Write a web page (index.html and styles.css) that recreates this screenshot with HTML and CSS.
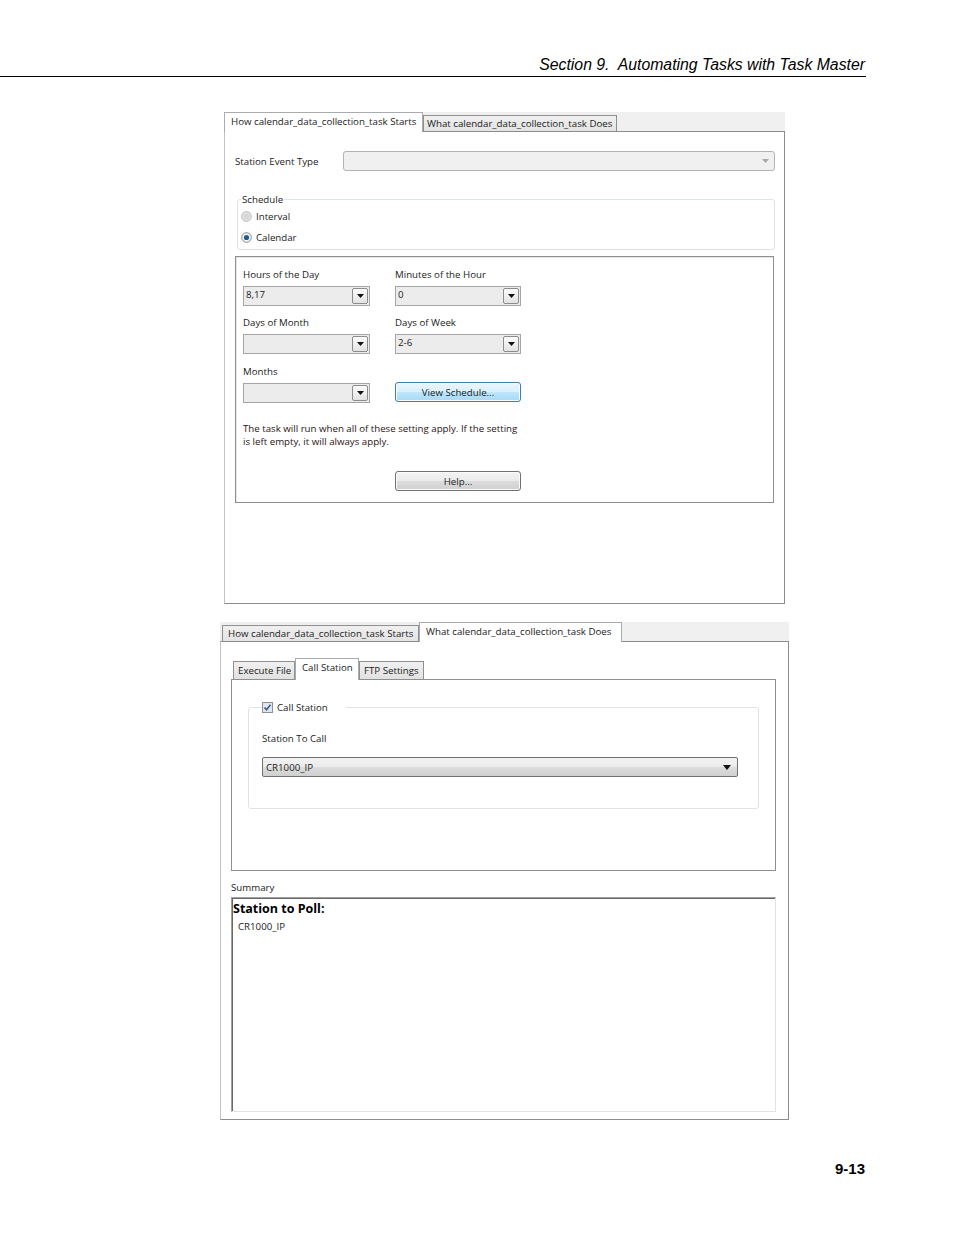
FILE: index.html
```html
<!DOCTYPE html>
<html lang="en">
<head>
    <meta charset="UTF-8">
    <meta name="viewport" content="width=device-width, initial-scale=1.0">
    <title>Section 9. Automating Tasks with Task Master</title>
    <link rel="stylesheet" href="styles.css">
</head>
<body>
    <div class="page-head"><span>Section 9.&nbsp; Automating Tasks with Task Master</span></div>

    <!-- first screenshot: how the task starts -->
    <div class="shot shot-start">
        <div class="tabs">
            <div class="tab active">How calendar_data_collection_task Starts</div>
            <div class="tab">What calendar_data_collection_task Does</div>
        </div>
        <div class="tab-body start-body">
            <div class="event-row">
                <span class="event-label">Station Event Type</span>
                <div class="flat-combo">
                    <svg width="7" height="4" viewBox="0 0 7 4"><path d="M0 0h7L3.5 4z" fill="#a8a8a8"/></svg>
                </div>
            </div>

            <fieldset class="group schedule">
                <legend>Schedule</legend>
                <div class="radio">
                    <svg width="11" height="11" viewBox="0 0 11 11"><circle cx="5.5" cy="5.5" r="4.8" fill="#e8e8e8" stroke="#b5b5b5"/><circle cx="5.5" cy="5.5" r="3" fill="#d6d6d6"/></svg>
                    <span>Interval</span>
                </div>
                <div class="radio">
                    <svg width="11" height="11" viewBox="0 0 11 11"><circle cx="5.5" cy="5.5" r="4.8" fill="#f4f4f4" stroke="#8a8a8a"/><circle cx="5.5" cy="5.5" r="2.6" fill="#1f5f8f"/></svg>
                    <span>Calendar</span>
                </div>
            </fieldset>

            <div class="calendar-box">
                <div class="cal-grid">
                    <div class="field">
                        <div class="field-label">Hours of the Day</div>
                        <div class="dropdown"><span>8,17</span><span class="drop-btn"><svg width="7" height="4" viewBox="0 0 7 4"><path d="M0 0h7L3.5 4z" fill="#111"/></svg></span></div>
                    </div>
                    <div class="field">
                        <div class="field-label">Minutes of the Hour</div>
                        <div class="dropdown"><span>0</span><span class="drop-btn"><svg width="7" height="4" viewBox="0 0 7 4"><path d="M0 0h7L3.5 4z" fill="#111"/></svg></span></div>
                    </div>
                    <div class="field">
                        <div class="field-label">Days of Month</div>
                        <div class="dropdown"><span></span><span class="drop-btn"><svg width="7" height="4" viewBox="0 0 7 4"><path d="M0 0h7L3.5 4z" fill="#111"/></svg></span></div>
                    </div>
                    <div class="field">
                        <div class="field-label">Days of Week</div>
                        <div class="dropdown"><span>2-6</span><span class="drop-btn"><svg width="7" height="4" viewBox="0 0 7 4"><path d="M0 0h7L3.5 4z" fill="#111"/></svg></span></div>
                    </div>
                    <div class="field last-row">
                        <div class="field-label">Months</div>
                        <div class="dropdown"><span></span><span class="drop-btn"><svg width="7" height="4" viewBox="0 0 7 4"><path d="M0 0h7L3.5 4z" fill="#111"/></svg></span></div>
                    </div>
                    <div class="field last-row button-field">
                        <button type="button" class="btn btn-blue">View Schedule...</button>
                    </div>
                </div>
                <p class="note">The task will run when all of these setting apply. If the setting<br>is left empty, it will always apply.</p>
                <div class="help-row">
                    <button type="button" class="btn">Help...</button>
                </div>
            </div>
        </div>
    </div>

    <!-- second screenshot: what the task does -->
    <div class="shot shot-does">
        <div class="tabs">
            <div class="tab">How calendar_data_collection_task Starts</div>
            <div class="tab active">What calendar_data_collection_task Does</div>
        </div>
        <div class="tab-body does-body">
            <div class="subtabs">
                <div class="subtab">Execute File</div>
                <div class="subtab active">Call Station</div>
                <div class="subtab">FTP Settings</div>
            </div>
            <div class="sub-panel">
                <fieldset class="group call-group">
                    <legend>
                        <svg width="11" height="11" viewBox="0 0 11 11"><rect x="0.5" y="0.5" width="10" height="10" fill="#dfe6ee" stroke="#8e8f8f"/><path d="M2.5 5.5l2 2.3 4-5" fill="none" stroke="#3b5a8a" stroke-width="1.6"/></svg>
                        <span>Call Station</span>
                    </legend>
                    <div class="call-label">Station To Call</div>
                    <div class="wide-combo">
                        <span>CR1000_IP</span>
                        <svg width="8" height="5" viewBox="0 0 8 5"><path d="M0 0h8L4 5z" fill="#111"/></svg>
                    </div>
                </fieldset>
            </div>
            <div class="summary-label">Summary</div>
            <div class="summary">
                <div class="summary-title">Station to Poll:</div>
                <div class="summary-item">CR1000_IP</div>
            </div>
        </div>
    </div>

    <div class="page-foot">9-13</div>
</body>
</html>
```

FILE: styles.css
```css
body {
    margin: 0;
    background: #fff;
    color: #000;
    font-family: "Liberation Sans", Arial, sans-serif;
}

.page-head {
    width: 866px;
    padding: 56px 0 3px;
    border-bottom: 1px solid #000;
    text-align: right;
    font-size: 15.8px;
    line-height: 17px;
    font-style: italic;
}

.page-head span {
    padding-right: 1px;
}

.page-foot {
    width: 865px;
    margin-top: 40px;
    text-align: right;
    font-size: 15px;
    line-height: 17px;
    font-weight: bold;
}

/* windows dialog look */
.shot {
    font-family: "Open Sans", "Noto Sans", sans-serif;
    font-size: 9.7px;
    color: #1a1a1a;
}

.shot-start {
    margin: 35px 0 0 224px;
    width: 561px;
}

.shot-does {
    margin: 18px 0 0 220px;
    width: 569px;
}

.tabs {
    display: flex;
    align-items: flex-end;
    height: 19px;
    background: #f0f0f0;
}

.tab {
    box-sizing: border-box;
    height: 16px;
    padding: 0 0 0 3px;
    line-height: 15px;
    white-space: nowrap;
    background: linear-gradient(#f0f0f0, #e3e3e3);
    border: 1px solid #8e8f8f;
    border-bottom: none;
}

.tab.active {
    position: relative;
    z-index: 1;
    height: 20px;
    margin-bottom: -1px;
    padding-left: 6px;
    line-height: 17px;
    background: #fff;
    border-color: #a9abaf;
}

.shot-start .tab.active { width: 199px; }
.shot-start .tab { width: 194px; }
.shot-does .tab { width: 197px; margin-left: 2px; padding-left: 5px; }
.shot-does .tab.active { width: 203px; margin-left: 0; padding-left: 6px; }

.tab-body {
    box-sizing: border-box;
    background: #fff;
    border: 1px solid #8c8c8c;
    border-left-color: #c3c3c3;
}

.start-body {
    height: 473px;
    width: 561px;
}

.does-body {
    width: 569px;
    height: 479px;
    padding-bottom: 7px;
}

.event-row {
    display: flex;
    align-items: center;
    height: 20px;
    margin-top: 19px;
    padding-left: 10px;
}

.event-label {
    width: 108px;
}

.flat-combo {
    box-sizing: border-box;
    width: 432px;
    height: 20px;
    display: flex;
    align-items: center;
    justify-content: flex-end;
    padding-right: 5px;
    background: #f0f0f0;
    border: 1px solid #b3b3b3;
    border-radius: 3px;
}

.group {
    margin: 0;
    border: 1px solid #dde3e8;
    border-radius: 3px;
}

.group legend {
    padding: 0 1px;
    line-height: 13px;
}

.schedule {
    margin: 22px 9px 0 12px;
    padding: 0 4px 5px 3px;
}

.radio {
    display: flex;
    align-items: center;
    gap: 4px;
    height: 13px;
    margin-top: 4px;
}

.radio + .radio {
    margin-top: 8px;
}

.calendar-box {
    margin: 6px 10px 0;
    padding: 11px 7px 11px;
    border: 1px solid #8f8f8f;
    box-shadow: inset 1px 1px 0 #e6e6e6;
}

.cal-grid {
    display: grid;
    grid-template-columns: 127px 126px;
    column-gap: 25px;
    row-gap: 10px;
}

.last-row {
    margin-top: 1px;
}

.field-label {
    line-height: 14px;
    margin-bottom: 4px;
}

.dropdown {
    box-sizing: border-box;
    height: 20px;
    display: flex;
    justify-content: space-between;
    align-items: flex-start;
    padding: 1px 1px 0 2px;
    line-height: 14px;
    background: #ececec;
    border: 1px solid #a5a5a5;
}

.drop-btn {
    box-sizing: border-box;
    width: 16px;
    height: 16px;
    display: flex;
    align-items: center;
    justify-content: center;
    background: linear-gradient(#fcfcfc, #e2e2e2);
    border: 1px solid #8c8c8c;
    border-radius: 2px;
}

.button-field {
    display: flex;
    align-items: flex-end;
}

.btn {
    box-sizing: border-box;
    width: 126px;
    height: 20px;
    padding: 0;
    font: inherit;
    color: #1a1a1a;
    background: linear-gradient(#f3f3f3 0%, #ebebeb 50%, #dcdcdc 51%, #cfcfcf 100%);
    border: 1px solid #707070;
    border-radius: 3px;
    box-shadow: inset 0 0 0 1px #fbfbfb;
}

.btn-blue {
    margin-bottom: 1px;
    background: linear-gradient(#eaf6fd 0%, #d9f0fc 50%, #bee6fd 51%, #a7d9f5 100%);
    border-color: #3c7fb1;
}

.note {
    margin: 19px 0 0;
    line-height: 13px;
    color: #2a1212;
}

.help-row {
    margin-top: 23px;
    padding-left: 152px;
}

.subtabs {
    display: flex;
    align-items: flex-end;
    margin: 16px 0 0 12px;
    height: 21px;
}

.subtab {
    box-sizing: border-box;
    height: 18px;
    padding: 0 0 0 4px;
    line-height: 17px;
    background: linear-gradient(#f0f0f0, #e1e1e1);
    border: 1px solid #8e8f8f;
    border-bottom: none;
}

.subtab:nth-child(1) { width: 62px; }
.subtab:nth-child(3) { width: 65px; }

.subtab.active {
    position: relative;
    z-index: 1;
    width: 64px;
    height: 22px;
    margin-bottom: -1px;
    padding-left: 6px;
    line-height: 18px;
    background: #fff;
    border-color: #a9abaf;
}

.sub-panel {
    box-sizing: border-box;
    width: 545px;
    height: 192px;
    margin-left: 10px;
    border: 1px solid #8e8f8f;
}

.call-group {
    width: 511px;
    box-sizing: border-box;
    margin: 21px 0 0 16px;
    padding: 0 0 31px 13px;
}

.call-group legend {
    display: flex;
    align-items: center;
    gap: 4px;
    padding: 0 18px 0 0;
}

.call-label {
    margin-top: 18px;
    line-height: 13px;
}

.wide-combo {
    box-sizing: border-box;
    width: 476px;
    height: 20px;
    margin-top: 12px;
    display: flex;
    justify-content: space-between;
    align-items: center;
    padding: 0 6px 0 3px;
    background: linear-gradient(#f2f2f2 0%, #ebebeb 50%, #dddddd 51%, #cfcfcf 100%);
    border: 1px solid #707070;
    border-radius: 2px;
}

.summary-label {
    margin: 10px 0 0 10px;
    line-height: 13px;
}

.summary {
    box-sizing: border-box;
    width: 545px;
    height: 215px;
    margin: 3px 0 0 10px;
    border: 1px solid #e3e3e3;
    border-top-color: #a0a0a0;
    border-left-color: #a0a0a0;
    box-shadow: inset 1px 1px 0 #696969;
    padding: 2px 0 0 1px;
}

.summary-title {
    font-size: 12.5px;
    font-weight: bold;
    line-height: 17px;
    color: #000;
}

.summary-item {
    margin-top: 3px;
    padding-left: 5px;
    line-height: 14px;
}
```
